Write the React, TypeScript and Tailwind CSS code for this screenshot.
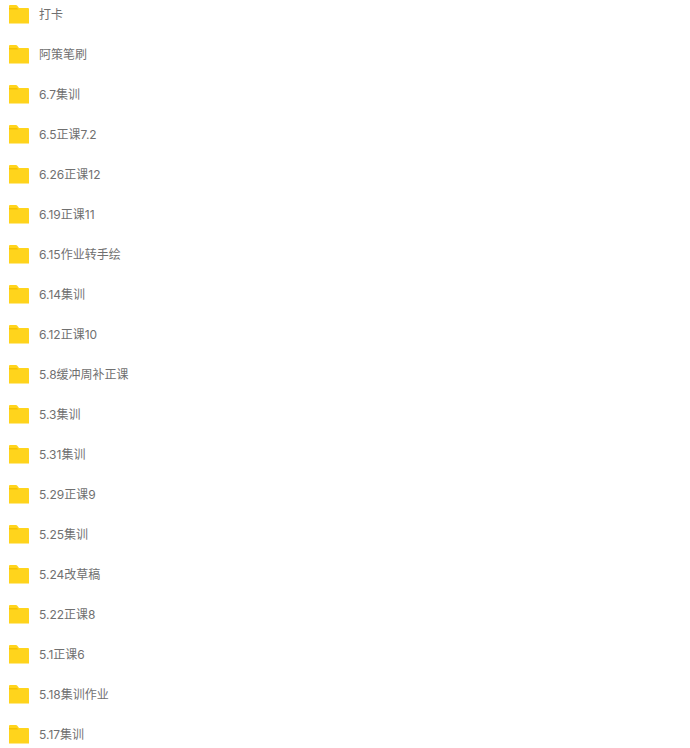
const folders = [
  '打卡', '阿策笔刷', '6.7集训', '6.5正课7.2', '6.26正课12', '6.19正课11', '6.15作业转手绘',
  '6.14集训', '6.12正课10', '5.8缓冲周补正课', '5.3集训', '5.31集训', '5.29正课9', '5.25集训',
  '5.24改草稿', '5.22正课8', '5.1正课6', '5.18集训作业', '5.17集训',
]

function FolderIcon() {
  return (
    <svg width="20" height="19" viewBox="0 0 20 19" className="mb-px shrink-0">
      <path d="M0 1.200C0 .5.5 0 1.200 0h5.800c.5 0 .8.2 1.100.5L10 3h8.800c.7 0 1.200.5 1.200 1.200v13.600c0 .7-.5 1.200-1.200 1.200H1.200C.5 19 0 18.500 0 17.800z" fill="#ffd41c" />
      <path d="M0 3h8l1.500 1.500H0z" fill="#f5c000" />
      <path d="M0 18h20v.300c0 .4-.3.700-.7.700H.7c-.4 0-.7-.3-.7-.7z" fill="#ffe98a" />
    </svg>
  )
}

export default function App() {
  return (
    <div className="h-[748px] w-[690px] overflow-hidden bg-white">
      <ul className="-mt-[5px] flex flex-col">
        {folders.map((name) => (
          <li key={name} className="flex h-10 items-center gap-[10px] pl-[9px]">
            <FolderIcon />
            <span className="text-[12px] text-[#707070] [font-family:Inter,'Noto_Sans_CJK_SC',sans-serif]">{name}</span>
          </li>
        ))}
      </ul>
    </div>
  )
}
